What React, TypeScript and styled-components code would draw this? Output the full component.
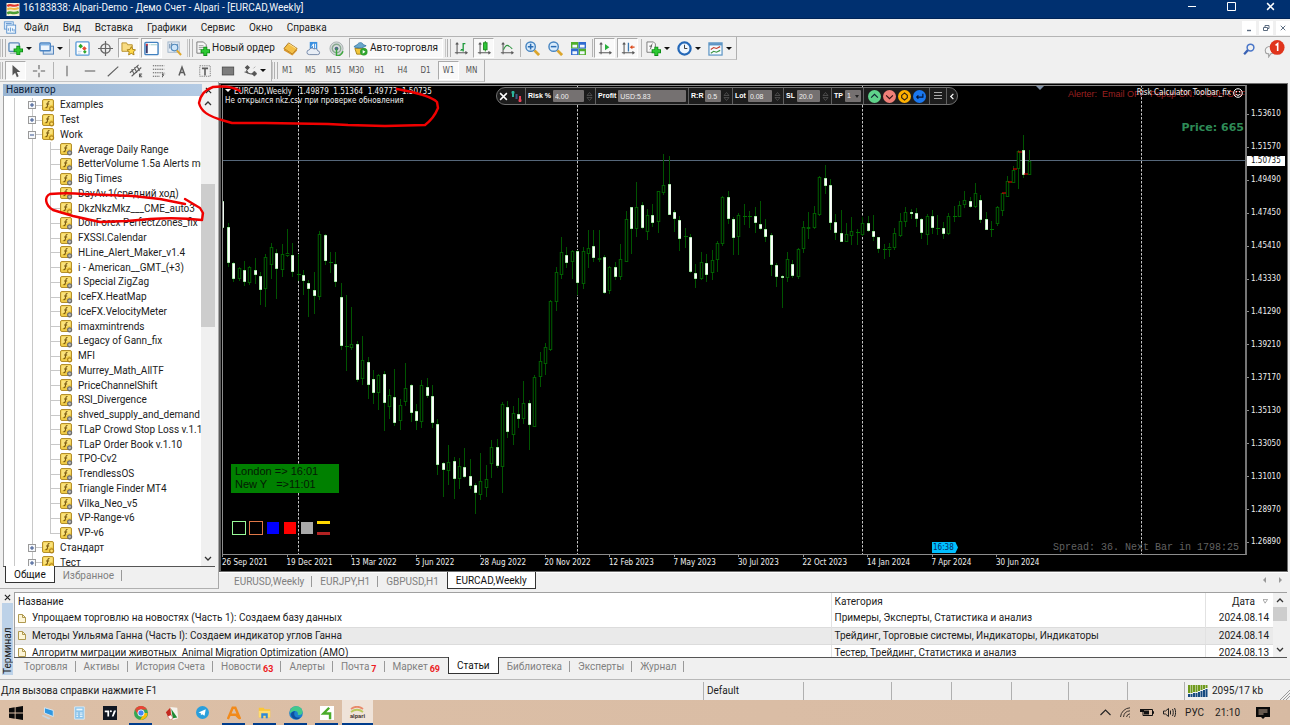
import React from "react";
import styled, { createGlobalStyle, css } from "styled-components";

const ui = `Roboto, "Noto Sans", sans-serif`;
const chartFont = `"DejaVu Sans Condensed", "DejaVu Sans", sans-serif`;
const plainFont = `"Liberation Sans", Arial, sans-serif`;

const Global = createGlobalStyle`
  * { box-sizing: border-box; }
  html, body, #root { height: 100%; margin: 0; }
  body { font: 10px/14px ${ui}; color: #1c1c1c; background: #f0f0f0; overflow: hidden; }
  button, input, select { font: inherit; color: inherit; margin: 0; padding: 0; border: 0; background: none; border-radius: 0; }
  svg { display: block; flex: none; }
  ul { list-style: none; margin: 0; padding: 0; }
`;

/* ---------- window shell ---------- */

const Window = styled.div`
  position: relative;
  display: flex;
  flex-direction: column;
  height: 100vh;
`;

const TitleBar = styled.header`
  display: flex;
  align-items: center;
  height: 19px;
  padding-left: 6px;
  background: #003070;
  border-bottom: 1px solid #002458;
  color: #f2f5fa;
`;

const TitleText = styled.h1`
  flex: 1;
  margin: 0;
  padding: 0 0 3px 3px;
  font: 10px/14px ${ui};
`;

const WindowButton = styled.button`
  display: grid;
  place-items: center;
  width: 39px;
  height: 18px;
  padding-bottom: 5px;
`;

const MenuBar = styled.nav`
  display: flex;
  align-items: center;
  height: 18px;
  padding-left: 3px;
  border-bottom: 1px solid #b4b4b4;
`;

const MenuItem = styled.button`
  padding: 0 7px;
`;

const MdiButtons = styled.div`
  display: flex;
  gap: 3px;
  margin-left: auto;
`;

const MdiButton = styled.button`
  display: grid;
  place-items: center;
  width: 14px;
  height: 14px;
  background: #fff;
`;

/* ---------- toolbars ---------- */

const ToolRow = styled.div<{ $h: number }>`
  display: flex;
  align-items: stretch;
  height: ${(p) => p.$h}px;
`;

const ToolGroup = styled.div`
  display: flex;
  align-items: stretch;
  border-right: 1px solid #b0b0b0;
  border-bottom: 1px solid #c4c4c4;
`;

const Grip = styled.i`
  width: 5px;
  margin: 2px 0;
  border-left: 1px solid #c8c8c8;
  &::after {
    content: "";
    display: block;
    width: 2px;
    height: 100%;
    margin-left: 1px;
    border: solid #b2b2b2;
    border-width: 0 1px;
  }
`;

const Sep = styled.i<{ $w?: number }>`
  width: ${(p) => p.$w ?? 3}px;
  margin: 2px 0;
  background: linear-gradient(#b4b4b4, #b4b4b4) center / 1px 100% no-repeat;
`;

const pressed = css`
  background: #f9f9f9;
  border: 1px solid #fff;
  border-top-color: #aaa;
  border-left-color: #aaa;
`;

const Tool = styled.button<{ $on?: boolean }>`
  display: grid;
  place-items: center;
  width: 21px;
  margin: 1px 2px 1px 0;
  color: #555;
  ${(p) => p.$on && pressed}
`;

const DropTool = styled.button`
  display: flex;
  align-items: center;
  gap: 3px;
  width: 31px;
  padding-left: 3px;
  &::after {
    content: "";
    border: solid transparent;
    border-width: 3px 3px 0;
    border-top-color: #111;
  }
`;

const TextTool = styled.button<{ $on?: boolean; $w: number }>`
  display: flex;
  align-items: center;
  gap: 2px;
  width: ${(p) => p.$w}px;
  margin: 1px 0;
  padding-left: 3px;
  white-space: nowrap;
  ${(p) => p.$on && pressed}
  ${(p) => p.$on && "margin-right: 2px;"}
`;

const Frame = styled(Tool)`
  font: 8px/12px ${chartFont};
  color: #555;
`;

const RightTools = styled.div`
  display: flex;
  align-items: center;
  gap: 9px;
  margin-left: auto;
  padding-right: 5px;
`;

/* ---------- middle area ---------- */

const Main = styled.main`
  display: flex;
  flex: 1;
  min-height: 0;
`;

const Navigator = styled.aside`
  display: flex;
  flex-direction: column;
  flex: none;
  width: 219px;
  padding: 2px 3px 4px 3px;
  border-right: 1px solid #a8a8a8;
  border-bottom: 1px solid #b0b0b0;
`;

const PanelHead = styled.div`
  display: flex;
  align-items: center;
  height: 12px;
`;

const PanelTitle = styled.h2`
  flex: 1;
  margin: 0;
  padding-left: 3px;
  height: 12px;
  font: 10px/12px ${ui};
  color: #0c1e3c;
  background: linear-gradient(90deg, #99b4d1, #b4cbe4);
`;

const CloseButton = styled.button`
  display: grid;
  place-items: center;
  width: 13px;
  height: 12px;
`;

const TreeBox = styled.div`
  display: flex;
  flex: 1;
  min-height: 0;
  overflow: hidden;
  background: #fff;
  border-left: 1px solid #a0a0a0;
`;

const Tree = styled.ul`
  flex: 1;
  display: flex;
  flex-direction: column;
  min-width: 0;
  height: calc(100% + 2px);
  overflow: hidden;
  margin-top: 2px;
  background: linear-gradient(#c8c8c8, #c8c8c8) 10px 0 / 1px 100% no-repeat;
`;

const TreeRow = styled.li<{ $level: 1 | 2; $last?: boolean }>`
  flex: 1 1 0;
  min-height: 0;
  display: flex;
  align-items: center;
  white-space: nowrap;
  padding-left: ${(p) => (p.$level === 1 ? 24 : 56)}px;
  background: ${(p) =>
      p.$level === 2
        ? `linear-gradient(#c8c8c8, #c8c8c8) 46px 0 / 1px ${p.$last ? "50%" : "100%"} no-repeat,
           linear-gradient(#c8c8c8, #c8c8c8) 46px 50% / 10px 1px no-repeat,`
        : `linear-gradient(#c8c8c8, #c8c8c8) 28px 50% / 10px 1px no-repeat,`}
    linear-gradient(#c8c8c8, #c8c8c8) 28px 0 / 1px 100% no-repeat;
`;

const Expander = styled.button`
  display: grid;
  place-items: center;
  width: 8px;
  height: 8px;
  margin-right: 6px;
  background: #f6f8fb;
  border: 1px solid #9a9a9a;
`;

const TreeLabel = styled.span`
  padding-left: 5px;
`;

const ScrollBar = styled.div<{ $w: number }>`
  display: flex;
  flex-direction: column;
  align-items: center;
  width: ${(p) => p.$w}px;
  background: #f0f0f0;
`;

const ScrollArrow = styled.button`
  display: grid;
  place-items: center;
  width: 100%;
  height: 14px;
`;

const Thumb = styled.div<{ $before: number; $size: number; $after: number }>`
  flex: ${(p) => p.$before + p.$size + p.$after};
  width: 100%;
  display: flex;
  flex-direction: column;
  &::before { content: ""; flex: ${(p) => p.$before}; }
  &::after { content: ""; flex: ${(p) => p.$after}; }
  i { flex: ${(p) => p.$size}; background: #cdcdcd; }
`;

const Tabs = styled.div<{ $h: number }>`
  display: flex;
  flex: none;
  align-items: flex-start;
  height: ${(p) => p.$h}px;
  border-top: 1px solid #555;
`;

const Tab = styled.button<{ $active?: boolean; $noLine?: boolean }>`
  position: relative;
  display: flex;
  padding: 0 8px;
  height: 16px;
  line-height: 17px;
  color: #808080;
  white-space: nowrap;
  &::after {
    content: "";
    position: absolute;
    right: 0;
    top: 3px;
    height: 11px;
    border-right: 1px solid #999;
    display: ${(p) => (p.$noLine || p.$active ? "none" : "block")};
  }
  ${(p) =>
    p.$active &&
    css`
      color: #111;
      background: #fff;
      border: 1px solid #333;
      border-top: 0;
      margin-top: -1px;
      height: 17px;
      line-height: 18px;
    `}
`;

const Count = styled.b`
  padding: 5px 0 0 2px;
  font: bold 9px/12px ${ui};
  color: #ec1c24;
`;

/* ---------- chart ---------- */

const ChartColumn = styled.section`
  display: flex;
  flex-direction: column;
  flex: 1;
  min-width: 0;
  padding: 1px 2px 0 0;
`;

const ChartFrame = styled.div`
  display: grid;
  grid-template-columns: minmax(0, 1fr) 40px;
  grid-template-rows: minmax(0, 1fr) 16px;
  flex: 1;
  min-height: 0;
  padding: 1px 0 0 1px;
  background: #000;
  border: 1px solid #6e6e6e;
  border-left: 2px solid #5c5c5c;
  color: #f0f0f0;
  font: 8px/10px ${chartFont};
`;

const Plot = styled.div`
  position: relative;
  min-width: 0;
  overflow: hidden;
  > svg { width: 100%; height: 100%; }
  &::after {
    content: "";
    position: absolute;
    inset: 0;
    border: 1px solid #8c8c8c;
    border-right: 2px solid #757575;
    pointer-events: none;
  }
`;

const PriceAxis = styled.ul`
  position: relative;
  display: flex;
  flex-direction: column;
  padding-top: 13px;
  margin-bottom: -4px;
`;

const PriceTick = styled.li`
  flex: 1;
  display: flex;
  align-items: center;
  &::before {
    content: "";
    width: 2px;
    margin-right: 2px;
    border-top: 1px solid #8c8c8c;
  }
`;

const CurrentPrice = styled.li`
  position: absolute;
  top: 71px;
  left: 0;
  width: 38px;
  padding-left: 4px;
  background: #fff;
  color: #111;
`;

const TimeAxis = styled.ul`
  grid-column: 1 / 3;
  display: grid;
  grid-template-columns: repeat(16, minmax(0, 1fr));
  padding-right: 33px;
`;

const TimeTick = styled.li`
  white-space: nowrap;
  line-height: 11px;
  &::before {
    content: "";
    display: block;
    width: 1px;
    height: 2px;
    background: #8c8c8c;
  }
`;

const Quote = styled.div`
  position: absolute;
  top: 2px;
  left: 3px;
  line-height: 9px;
  white-space: pre;
  p { margin: 0; }
`;

const Triangle = styled.i`
  display: inline-block;
  margin: 0 3px 2px 0;
  border: solid transparent;
  border-width: 3px 3px 0;
  border-top-color: #fff;
`;

const Corner = styled.div<{ $top?: number; $bottom?: number; $right: number }>`
  position: absolute;
  right: ${(p) => p.$right}px;
  ${(p) => (p.$top !== undefined ? `top: ${p.$top}px;` : `bottom: ${p.$bottom}px;`)}
  display: flex;
  align-items: center;
  gap: 2px;
  white-space: pre;
`;

const Alerter = styled(Corner)`
  font: 9px/12px ${plainFont};
  color: #9c2020;
`;

const IndicatorName = styled(Corner)`
  line-height: 12px;
`;

const PriceNote = styled(Corner)`
  font: bold 11px/14px "DejaVu Sans", sans-serif;
  color: #2e8b57;
`;

const SpreadNote = styled(Corner)`
  font: 10px/12px "Liberation Mono", monospace;
  color: #626262;
`;

const Sessions = styled.div`
  position: absolute;
  left: 9px;
  bottom: 62px;
  width: 108px;
  padding: 1px 4px 2px;
  background: #008000;
  color: #041a04;
  font: 11px/13px ${plainFont};
  white-space: pre;
`;

const Palette = styled.div`
  position: absolute;
  left: 10px;
  bottom: 20px;
  display: flex;
  gap: 3px;
`;

const Swatch = styled.button<{ $fill?: string; $line?: string }>`
  width: 14px;
  height: 14px;
  background: ${(p) => p.$fill ?? "#000"};
  border: 1px solid ${(p) => p.$line ?? "#000"};
`;

const Levels = styled.button`
  width: 13px;
  height: 14px;
  border: solid #ffd800;
  border-width: 3px 0;
  border-bottom-color: #b22222;
`;

const BarClock = styled.div`
  position: absolute;
  left: 710px;
  bottom: 2px;
  width: 26px;
  padding-left: 1px;
  background: #00bfff;
  color: #062a66;
  line-height: 11px;
  clip-path: polygon(0 0, 90% 0, 100% 50%, 90% 100%, 0 100%);
`;

/* ---------- risk calculator ---------- */

const RiskBar = styled.form`
  position: absolute;
  left: 274px;
  top: 2px;
  display: flex;
  height: 18px;
  background: #1c1c1c;
  border: 1px solid #707070;
  border-radius: 9px;
  color: #fff;
  font: bold 7px/10px ${plainFont};
  z-index: 1;
`;

const RiskPart = styled.div<{ $w: number }>`
  display: flex;
  align-items: center;
  gap: 2px;
  width: ${(p) => p.$w}px;
  padding: 0 2px;
  & + & { border-left: 1px solid #606060; }
  label { white-space: nowrap; }
`;

const fieldStyle = css`
  height: 12px;
  padding-left: 2px;
  background: #757171;
  border-radius: 1px;
  color: #f0f0f0;
  font: 7px/10px ${plainFont};
`;

const RiskInput = styled.input`
  flex: 1;
  min-width: 0;
  ${fieldStyle}
`;

const RiskSelect = styled.select`
  appearance: none;
  width: 16px;
  ${fieldStyle}
`;

const SelectWrap = styled.span`
  position: relative;
  &::after {
    content: "";
    position: absolute;
    right: 2px;
    top: 5px;
    border: solid transparent;
    border-width: 3px 2px 0;
    border-top-color: #222;
    pointer-events: none;
  }
`;

const RoundGroup = styled(RiskPart)`
  justify-content: center;
`;

const Round = styled.button<{ $c: string }>`
  display: grid;
  place-items: center;
  flex: none;
  width: 13px;
  height: 13px;
  border-radius: 50%;
  background: ${(p) => p.$c};
`;

const Plain = styled.button`
  display: grid;
  place-items: center;
  flex: none;
  height: 14px;
`;

/* ---------- terminal ---------- */

const Terminal = styled.section`
  display: flex;
  height: 91px;
  border-bottom: 1px solid #b8b8b8;
`;

const TerminalSide = styled.div`
  display: flex;
  flex-direction: column;
  width: 14px;
  padding: 2px 1px 4px 1px;
`;

const SideTitle = styled.h2`
  flex: 1;
  margin: 0 0 0 1px;
  writing-mode: vertical-rl;
  transform: rotate(180deg);
  font: 10px/11px ${ui};
  background: #bdd2e8;
  padding-top: 1px;
`;

const TerminalBody = styled.div`
  display: flex;
  flex-direction: column;
  flex: 1;
  min-width: 0;
  padding: 3px 3px 4px 0;
`;

const TableArea = styled.div`
  display: flex;
  flex: 1;
  min-height: 0;
  overflow: hidden;
  background: #fff;
  border: solid #a0a0a0;
  border-width: 1px 0 0 1px;
`;

const Articles = styled.table`
  flex: 1;
  table-layout: fixed;
  border-collapse: collapse;
  align-self: flex-start;
  th, td {
    height: 17px;
    padding: 0 3px;
    font-weight: normal;
    text-align: left;
    white-space: pre;
    border-right: 1px solid #e2e2e2;
  }
  th:last-child, td:last-child { text-align: right; border-right: 0; }
  td:last-child { padding-right: 4px; }
  th:last-child { padding-right: 5px; }
  tbody tr:nth-child(2) { background: #eaeaea; }
  tbody tr:nth-child(2) td { border-top: 1px solid #dcdcdc; border-bottom: 1px solid #dcdcdc; }
`;

const WithIcon = styled.a`
  display: flex;
  align-items: center;
  gap: 6px;
  color: inherit;
  text-decoration: none;
`;

const SortMark = styled.span`
  display: inline-block;
  vertical-align: middle;
  margin-left: 8px;
`;

/* ---------- status and task bars ---------- */

const StatusBar = styled.footer`
  display: flex;
  align-items: stretch;
  height: 20px;
  padding: 2px 0 0;
`;

const StatusCell = styled.div<{ $w?: number }>`
  display: flex;
  align-items: center;
  gap: 3px;
  ${(p) => (p.$w ? `width: ${p.$w}px;` : "flex: 1;")}
  padding-left: 1px;
  white-space: nowrap;
  & + & { padding-left: 3px; border-left: 1px solid #b0b0b0; }
`;

const TaskBar = styled.footer`
  display: flex;
  height: 25px;
  background: linear-gradient(90deg, #dcbfa6, #dabda5 60%, #d8bba3);
`;

const TaskItem = styled.button<{ $open?: boolean; $active?: boolean; $w?: number }>`
  position: relative;
  display: grid;
  place-items: center;
  width: ${(p) => p.$w ?? 31}px;
  ${(p) => p.$active && "background: #efe3d9;"}
  ${(p) =>
    (p.$open || p.$active) &&
    css`
      &::after {
        content: "";
        position: absolute;
        left: ${p.$active ? 0 : 4}px;
        right: ${p.$active ? 0 : 4}px;
        bottom: 0;
        height: 2px;
        background: #003c8c;
      }
    `}
`;

const Tray = styled.div`
  display: flex;
  align-items: center;
  gap: 9px;
  margin-left: auto;
  padding-right: 20px;
  time { margin: 0 7px 0 2px; }
`;

const Annotation = styled.svg`
  position: absolute;
  left: 0;
  top: 0;
  overflow: visible;
  pointer-events: none;
  z-index: 2;
`;

/* ---------- icons ---------- */

type IconProps = { s?: number; h?: number; box?: string; children: React.ReactNode };
const Icon = ({ s = 15, h, box = "0 0 16 16", children }: IconProps) => (
  <svg width={s} height={h ?? s} viewBox={box} fill="none" aria-hidden="true">
    {children}
  </svg>
);

const Plus = ({ x, y }: { x: number; y: number }) => (
  <>
    <path d={`M${x} ${y - 5}v10M${x - 5} ${y}h10`} stroke="#0c8a14" strokeWidth="4.200" />
    <path d={`M${x} ${y - 4}v8M${x - 4} ${y}h8`} stroke="#2cc832" strokeWidth="2.600" />
  </>
);

const AppLogo = () => (
  <Icon s={14} h={13}>
    <rect width="16" height="16" fill="#f6efd8" />
    <path d="M1 4c4-4 6 2 14-2" stroke="#e0352b" strokeWidth="2.6" />
    <path d="M1 8c4-4 6 2 14-2" stroke="#efb73e" strokeWidth="2.4" />
    <path d="M1 13c4-4 6 2 14-2" stroke="#4b9e35" strokeWidth="3" />
  </Icon>
);
const MdiLogo = () => (
  <Icon s={14} h={13}>
    <rect x="1" y="1" width="11" height="9" fill="#dcebfa" stroke="#5a94d0" />
    <rect x="4" y="5" width="11" height="10" fill="#eef6fd" stroke="#4a86c8" />
    <path d="M3 3h7M6 12V9M8.500 13V8M11 12V9M13 13v-3" stroke="#4a86c8" />
  </Icon>
);
const NewChartIcon = () => (
  <Icon>
    <rect x="1" y="2" width="11" height="9" rx="1" fill="#e9f2fb" stroke="#5b88b8" strokeWidth="1.400" />
    <path d="M2 13h9" stroke="#8aa" />
    <Plus x={11} y={10} />
  </Icon>
);
const ProfilesIcon = () => (
  <Icon>
    <rect x="4.500" y="5.500" width="11" height="8.500" fill="#cfe0f2" stroke="#5080b8" />
    <rect x="1" y="2" width="11" height="8.500" rx="1" fill="#eef5fc" stroke="#4a84c4" strokeWidth="1.600" />
    <path d="M2 4h9" stroke="#7ab0e4" strokeWidth="1.500" />
  </Icon>
);
const MarketIcon = () => (
  <Icon>
    <rect x="1" y="1" width="14" height="14" rx="1" fill="#fff" stroke="#5b9bd8" strokeWidth="1.400" />
    <path d="M6 3l2.500 2.500L6 8 3.500 5.500z" fill="#2ea82e" />
    <path d="M10 5.500l2.500 2.500L10 10.500 7.500 8z" fill="#e84a32" />
    <path d="M10.500 9.500l2 2-2 2-2-2z" fill="#2ea82e" />
    <path d="M3 11h4M3 13h3" stroke="#c4d4e4" />
  </Icon>
);
const TargetIcon = () => (
  <Icon>
    <circle cx="8" cy="8" r="5" stroke="#666" strokeWidth="1.400" />
    <path d="M8 0v16M0 8h16" stroke="#666" strokeWidth="1.300" />
  </Icon>
);
const FavIcon = () => (
  <Icon>
    <path d="M1 2h5l1 2h5v7H1z" fill="#f8dc84" stroke="#b8902c" />
    <path d="M11 6l1.500 3 3 .4-2.200 2.200.6 3.200-2.900-1.600-2.900 1.600.6-3.200L6.500 9.400l3-.4z" fill="#ffd94a" stroke="#a87f18" />
  </Icon>
);
const PanelIcon = () => (
  <Icon>
    <rect x="1" y="1.500" width="14" height="13" rx="1" fill="#fdfeff" stroke="#4080c0" strokeWidth="1.500" />
    <path d="M3 3v10" stroke="#3a3a6a" strokeWidth="2" />
    <path d="M5 4h1M7 4h7" stroke="#9cc" />
    <circle cx="3" cy="4" r="1" fill="#e33" />
  </Icon>
);
const TesterIcon = () => (
  <Icon>
    <rect x="1" y="1" width="12" height="11" fill="#e6eef6" stroke="#a0b4c8" />
    <path d="M3 3v5M5 2v6M11 3v4" stroke="#5c7c9c" />
    <circle cx="8" cy="7" r="3.500" fill="#cde4f8" stroke="#5088bc" strokeWidth="1.200" />
    <path d="M10.500 10l4.500 5" stroke="#e0a82c" strokeWidth="2.200" />
  </Icon>
);
const OrderIcon = () => (
  <Icon>
    <path d="M2 1h7l3 3v9H2z" fill="#f6f6f6" stroke="#777" />
    <path d="M4 5h5M4 7h6M4 9h3" stroke="#999" />
    <Plus x={11} y={11} />
  </Icon>
);
const BookIcon = () => (
  <Icon>
    <path d="M6 2l9 6-5 6-9-6z" fill="#f3bf46" stroke="#a8741c" />
    <path d="M1 8l9 6 5-6v2l-5 5.500L1 10z" fill="#d8942a" />
    <path d="M6 3l8 5" stroke="#ffe49a" />
  </Icon>
);
const CloudIcon = () => (
  <Icon>
    <rect x="4" y="1" width="8" height="9" fill="#3a90e0" />
    <path d="M6 6l2-3v5M10 3v5" stroke="#fff" />
    <path d="M3.500 14.500a2.500 2.500 0 010-5 3 3 0 015-1 3 3 0 014 2 2 2 0 010 4z" fill="#e8eef6" stroke="#7488a8" />
  </Icon>
);
const SignalIcon = () => (
  <Icon>
    <circle cx="8" cy="8" r="7" fill="#d8dcdc" stroke="#a8b0b0" />
    <circle cx="8" cy="8" r="4.500" stroke="#88a890" strokeWidth="1.500" />
    <circle cx="8" cy="8" r="2" fill="#4c6888" />
    <path d="M8 8v8c3 0 6-2 7-5" stroke="#3aa83a" strokeWidth="1.500" />
  </Icon>
);
const RobotIcon = () => (
  <Icon>
    <path d="M2 8l2 6h7l2-6z" fill="#f2c63a" stroke="#a8841c" />
    <path d="M1 6c3 2 9 2 13-1l-3-1C10 1 6 1 4.500 4z" fill="#6aa8cc" stroke="#3f7ea8" />
    <circle cx="11.500" cy="11.500" r="4" fill="#2fa42f" />
    <path d="M10.300 9.500v4l3-2z" fill="#fff" />
  </Icon>
);
const Axes = ({ children }: { children: React.ReactNode }) => (
  <Icon s={14}>
    <path d="M3.500 3v12M1 13.500h14M2 4l1.500-2L5 4M13 12l2 1.500-2 1.500" stroke="#5a5a5a" strokeWidth="1.200" />
    {children}
  </Icon>
);
const BarsIcon = () => (
  <Axes>
    <path d="M8 10h2.500V3H13M10.500 3v9M8 10v1" stroke="#1f9a3c" strokeWidth="1.500" />
  </Axes>
);
const CandleIcon = () => (
  <Axes>
    <path d="M9.500 0v12" stroke="#168a16" />
    <rect x="7.500" y="2" width="4" height="8" fill="#2fc43a" stroke="#168a16" />
  </Axes>
);
const LineIcon = () => (
  <Axes>
    <path d="M4 10c3-7 5-6 10-1" stroke="#2e9440" strokeWidth="1.200" />
  </Axes>
);
const ZoomIcon = ({ plus }: { plus?: boolean }) => (
  <Icon>
    <path d="M10 10l5 5" stroke="#dba52c" strokeWidth="3" />
    <circle cx="6" cy="6" r="5" fill="#d9ecfc" stroke="#4684c0" strokeWidth="1.500" />
    <path d={plus ? "M3 6h6M6 3v6" : "M3 6h6"} stroke="#2a6cb4" strokeWidth="1.600" />
  </Icon>
);
const TilesIcon = () => (
  <Icon>
    <path d="M0 1h8v7H0zM8 8h8v7H8z" fill="#4fae2a" />
    <path d="M8 1h8v7H8zM0 8h8v7H0z" fill="#2f6ad0" />
    <path d="M1.500 4h5v3h-5zM9.500 4h5v3h-5zM1.500 11h5v3h-5zM9.500 11h5v3h-5z" fill="#f0f6fc" />
  </Icon>
);
const AutoScrollIcon = () => (
  <Axes>
    <path d="M8 3.500v7l5-3.500z" fill="#27b03c" />
  </Axes>
);
const ShiftIcon = () => (
  <Axes>
    <path d="M8.500 2v10" stroke="#3c78b0" strokeWidth="1.500" />
    <path d="M10 7l3-2.500v5z" fill="#dc4a1c" />
    <path d="M12 7h3.500" stroke="#dc4a1c" strokeWidth="1.500" />
  </Axes>
);
const IndicatorsIcon = () => (
  <Icon>
    <path d="M1 1h7l2 2v9H1z" fill="#fafafa" stroke="#777" />
    <path d="M7 3c-2 0-1 6-3 6M3.500 5.500h3" stroke="#555" />
    <Plus x={11} y={11} />
  </Icon>
);
const ClockIcon = () => (
  <Icon>
    <circle cx="8" cy="8" r="6.500" fill="#eef6ff" stroke="#2468b8" strokeWidth="2.400" />
    <path d="M8 4v4h3" stroke="#333" />
  </Icon>
);
const TemplateIcon = () => (
  <Icon>
    <rect x="1" y="2" width="14" height="13" fill="#f4fafe" stroke="#5c94c4" strokeWidth="1.300" />
    <path d="M1 3.500h14" stroke="#5c94c4" strokeWidth="2.500" />
    <path d="M3 9l3-2 3 1 4-2" stroke="#c43a2a" strokeWidth="1.200" />
    <path d="M3 13l3-2 3 1 4-2" stroke="#3a9440" strokeWidth="1.200" />
  </Icon>
);
const SearchIcon = () => (
  <Icon s={12}>
    <circle cx="10" cy="6" r="4.500" stroke="#4a76c8" strokeWidth="2" />
    <path d="M6.500 9.500L1.500 15" stroke="#3a62b4" strokeWidth="3" />
  </Icon>
);
const BellIcon = () => (
  <Icon s={21} h={18} box="0 0 19 17">
    <path d="M1 11a5 4 0 119 1l-4 1-2 3v-3c-2 0-3-1-3-2z" fill="#f4f4f4" stroke="#a0a0a0" />
    <circle cx="12" cy="7" r="7" fill="#e0341c" />
    <path d="M10.500 5l2-1.500v7" stroke="#fff" strokeWidth="1.500" />
  </Icon>
);
const CursorIcon = () => (
  <Icon s={14}>
    <path d="M4 1v12l3-3 2 5 2-1-2-5h4z" fill="#555" />
  </Icon>
);
const Sketch = ({ d, w = 1.2, s = 14, dash }: { d: string; w?: number; s?: number; dash?: string }) => (
  <Icon s={s}>
    <path d={d} stroke="#5c5c5c" strokeWidth={w} strokeDasharray={dash} />
  </Icon>
);
const ShapesIcon = () => (
  <Icon s={14}>
    <path d="M5 1l3 3-3 3-3-3zM1 9l4-1 1 3z" fill="#555" />
    <path d="M4 7c1 4 4 5 8 4" stroke="#555" strokeWidth="1.200" />
    <path d="M13 8l3 3-3 3-3-3zM12 5l2-2" fill="#555" stroke="#555" strokeWidth=".5" />
  </Icon>
);
const FnIcon = ({ gold }: { gold?: boolean }) => (
  <Icon s={13} box="0 0 13 13">
    <rect x=".5" y=".5" width="11" height="11" rx="1.500" fill="#f0cc48" stroke="#b48f2c" />
    <path d="M1.500 1.500h9v4l-9 3z" fill="#fae27c" />
    <path d="M7.500 2.500c-2-.5-1.500 2-2 4s-.7 2.500-2 2M4 5h3.200" stroke="#7a5a10" strokeWidth="1.100" />
    <circle cx="9.600" cy="9.800" r="2" fill={gold ? "#ffe070" : "#b8b8b8"} stroke={gold ? "#b08418" : "#6c6c6c"} strokeWidth="1.200" />
  </Icon>
);
const Chevron = ({ up }: { up?: boolean }) => (
  <Icon s={8} box="0 0 8 8">
    <path d={up ? "M1 6l3-3 3 3" : "M1 2l3 3 3-3"} stroke="#333" strokeWidth="1.300" />
  </Icon>
);
const Cross = ({ s = 7, c = "#222" }: { s?: number; c?: string }) => (
  <Icon s={s} box="0 0 8 8">
    <path d="M1 1l6 6M7 1L1 7" stroke={c} strokeWidth="1.300" />
  </Icon>
);
const DocIcon = () => (
  <Icon s={8} h={9} box="0 0 8 9">
    <path d="M.5.5h4l3 3v5h-7z" fill="#fdf5d8" stroke="#b09a50" />
    <path d="M4.500.5v3h3" stroke="#b09a50" />
  </Icon>
);
const Spinner = () => (
  <Icon s={7} h={11} box="0 0 7 11">
    <path d="M1 4.500l2.500-3 2.500 3zM1 6.500l2.500 3 2.500-3z" stroke="#555" strokeWidth=".8" />
  </Icon>
);

/* ---------- chart data ---------- */

// One entry per week: high, body top, body bottom, low, and 1 for a falling (filled) candle.
const candles: number[][] = [
  [113,116,143,145,1],[138,142,178,182,1],[177,178,194,197,1],[182,183,194,196,0],[176,185,197,201,1],
  [181,182,198,200,0],[173,185,190,199,1],[187,191,205,220,1],[169,172,204,222,0],[158,162,180,194,0],
  [164,168,184,214,1],[159,169,185,192,0],[144,168,171,172,0],[158,170,187,192,1],[169,189,190,196,0],
  [185,190,196,210,1],[195,198,204,232,1],[187,205,211,229,1],[146,149,212,215,0],[149,150,176,180,1],
  [167,177,178,188,0],[167,179,197,202,1],[198,212,261,265,1],[210,261,262,286,0],[222,259,263,265,0],
  [256,259,295,297,1],[251,275,294,300,0],[272,277,300,314,1],[285,294,308,319,1],[289,290,308,325,0],
  [286,289,318,346,1],[304,310,322,334,0],[284,312,338,341,1],[314,320,336,345,0],[278,303,317,321,0],
  [299,300,328,337,1],[319,326,336,345,1],[295,300,337,343,0],[293,302,311,313,1],[300,311,338,343,1],
  [334,339,380,390,1],[377,378,385,412,1],[360,377,386,400,0],[372,376,394,414,1],[373,381,394,404,0],
  [363,382,392,393,1],[374,391,401,404,1],[398,400,408,429,1],[368,396,410,415,0],[380,394,403,412,0],
  [355,362,379,393,0],[354,362,381,383,1],[317,319,382,408,0],[316,322,347,353,1],[321,328,350,360,0],
  [313,329,334,343,1],[296,318,334,339,0],[315,318,340,365,1],[290,292,342,342,0],[267,276,292,302,0],
  [258,262,279,290,0],[215,216,265,266,0],[182,187,217,226,0],[152,167,190,194,0],[162,170,178,183,1],
  [165,166,177,194,0],[165,166,198,210,1],[162,166,199,204,0],[145,163,169,183,0],[145,161,173,177,1],
  [145,173,175,177,0],[170,172,208,209,1],[181,182,206,209,0],[177,182,192,195,1],[159,174,192,195,0],
  [126,134,177,177,0],[122,122,144,169,1],[97,122,144,152,0],[117,120,143,144,1],[124,130,147,155,0],
  [119,130,138,142,1],[106,106,137,148,0],[69,100,108,110,0],[71,99,130,130,1],[125,127,134,147,1],
  [131,135,154,166,1],[143,151,152,163,0],[149,152,187,188,1],[179,188,194,203,1],[167,177,194,195,0],
  [169,178,190,197,1],[165,175,188,195,0],[156,158,175,187,0],[111,112,159,161,0],[106,112,134,139,1],
  [132,134,153,170,1],[128,130,152,170,0],[119,131,132,140,1],[126,131,132,143,0],[122,131,138,148,1],
  [116,139,144,145,1],[134,144,152,157,1],[148,150,180,191,1],[178,180,192,202,1],[190,191,193,223,1],
  [167,174,193,197,0],[175,179,191,193,1],[163,164,192,194,0],[136,142,164,168,0],[127,142,144,154,0],
  [121,128,143,144,0],[91,92,130,131,0],[80,93,101,109,1],[94,100,138,145,1],[129,137,148,155,1],
  [125,148,157,157,1],[138,149,157,157,0],[132,146,151,160,0],[144,147,148,160,0],[132,138,150,151,0],
  [131,138,146,147,1],[130,146,152,156,1],[152,152,164,168,1],[159,164,165,174,0],[158,162,165,172,0],
  [143,148,163,165,0],[128,136,151,152,0],[122,127,137,142,0],[124,127,129,134,1],[123,128,134,142,1],
  [133,134,148,154,1],[129,131,150,160,0],[125,131,143,149,1],[130,143,144,150,0],[137,143,149,154,1],
  [128,131,149,150,0],[121,131,132,137,0],[116,120,132,132,0],[106,115,120,123,0],[112,116,122,123,1],
  [98,108,122,123,0],[110,115,135,138,1],[127,134,145,145,1],[136,144,145,152,0],[121,122,139,141,0],
  [108,108,126,131,0],[91,96,112,112,0],[81,85,98,98,0],[65,66,84,104,0],[50,65,90,93,1],[65,76,90,90,0],
];
const STEP = 5.376;
const yearLines = [76, 355, 640, 919];
const signals = [[782, 108], [788, 97], [793, 84], [798, 67], [804, 89]];

const CandleChart = () => (
  <svg viewBox="0 0 1025 470" preserveAspectRatio="none" role="img" aria-label="EURCAD Weekly">
    {yearLines.map((x) => (
      <path key={x} d={`M${x + 0.5} 0V470`} stroke="#c4c4c4" strokeDasharray="2.500 1.500" />
    ))}
    <path d="M0 75.500H1025" stroke="#55677a" />
    {candles.map(([hi, top, bot, lo, falling], i) => {
      const x = Math.floor(0.9 + i * STEP);
      const h = Math.max(1, bot - top);
      return (
        <g key={i}>
          <path d={`M${x + 0.5} ${hi}V${lo}`} stroke="#005400" />
          {h <= 1 ? (
            <path d={`M${x - 1} ${top + 0.5}h4`} stroke="#007000" />
          ) : falling ? (
            <>
              <rect x={x - 1} y={top} width="3" height={h} fill="#5fd35f" />
              <rect x={x - 0.5} y={top + 0.5} width="2.400" height={h - 1} fill="#fff" />
            </>
          ) : (
            <rect x={x - 0.75} y={top + 0.5} width="2.500" height={h - 1} fill="#000" stroke="#006000" />
          )}
        </g>
      );
    })}
    {signals.map(([x, y]) => (
      <path key={x} d={`M${x - 2} ${y}h4`} stroke="#f00000" />
    ))}
    <path d="M814 1h8l-4 4z" fill="#7f90a6" />
  </svg>
);

const prices = ["1.53610","1.51570","1.49490","1.47450","1.45410","1.43330","1.41290","1.39210","1.37170","1.35130","1.33050","1.31010","1.28970","1.26890"];
const dates = ["26 Sep 2021","19 Dec 2021","13 Mar 2022","5 Jun 2022","28 Aug 2022","20 Nov 2022","12 Feb 2023","7 May 2023","30 Jul 2023","22 Oct 2023","14 Jan 2024","7 Apr 2024","30 Jun 2024"];

type Node = { name: string; level: 1 | 2; open?: boolean; gold?: boolean };
const work = ["Average Daily Range","BetterVolume 1.5a Alerts mod","Big Times","DayAv.1(средний ход)","DkzNkzMkz___CME_auto3","DonForex PerfectZones_fix","FXSSI.Calendar","HLine_Alert_Maker_v1.4","i - American__GMT_(+3)","I Special ZigZag","IceFX.HeatMap","IceFX.VelocityMeter","imaxmintrends","Legacy of Gann_fix","MFI","Murrey_Math_AllTF","PriceChannelShift","RSI_Divergence","shved_supply_and_demand","TLaP Crowd Stop Loss v.1.19","TLaP Order Book v.1.10","TPO-Cv2","TrendlessOS","Triangle Finder MT4","Vilka_Neo_v5","VP-Range-v6","VP-v6"];
const goldNames = ["DkzNkzMkz___CME_auto3", "i - American__GMT_(+3)", "MFI"];
const nodes: Node[] = [
  { name: "Examples", level: 1, gold: true },
  { name: "Test", level: 1, gold: true },
  { name: "Work", level: 1, gold: true, open: true },
  ...work.map((name) => ({ name, level: 2 as const, gold: goldNames.includes(name) })),
  { name: "Стандарт", level: 1, gold: true },
  { name: "Тест", level: 1, gold: true },
];

const articles = [
  ["Упрощаем торговлю на новостях (Часть 1): Создаем базу данных", "Примеры, Эксперты, Статистика и анализ", "2024.08.14"],
  ["Методы Уильяма Ганна (Часть I): Создаем индикатор углов Ганна", "Трейдинг, Торговые системы, Индикаторы, Индикаторы", "2024.08.14"],
  ["Алгоритм миграции животных  Animal Migration Optimization (AMO)", "Тестер, Трейдинг, Статистика и анализ", "2024.08.13"],
];

const terminalTabs: [string, string?][] = [["Торговля"],["Активы"],["История Счета"],["Новости","63"],["Алерты"],["Почта","7"],["Маркет","69"],["Статьи"],["Библиотека"],["Эксперты"],["Журнал"]];

/* ---------- sections ---------- */

const Toolbars = () => (
  <>
    <ToolRow $h={23}>
      <ToolGroup>
        <Grip />
        <DropTool aria-label="Новый график"><NewChartIcon /></DropTool>
        <DropTool aria-label="Профили"><ProfilesIcon /></DropTool>
        <Sep $w={5} />
        <Tool aria-label="Обзор рынка"><MarketIcon /></Tool>
        <Tool aria-label="Окно данных"><TargetIcon /></Tool>
        <Tool $on aria-label="Навигатор"><FavIcon /></Tool>
        <Tool $on aria-label="Терминал"><PanelIcon /></Tool>
        <Tool aria-label="Тестер"><TesterIcon /></Tool>
        <Grip />
        <TextTool $w={88}><OrderIcon />Новый ордер</TextTool>
        <Tool aria-label="MetaEditor"><BookIcon /></Tool>
        <Tool aria-label="Облако"><CloudIcon /></Tool>
        <Tool aria-label="Сигналы"><SignalIcon /></Tool>
        <TextTool $on $w={94}><RobotIcon />Авто-торговля</TextTool>
        <Grip />
        <Tool aria-label="Бары"><BarsIcon /></Tool>
        <Tool $on aria-label="Свечи"><CandleIcon /></Tool>
        <Tool aria-label="Линия"><LineIcon /></Tool>
        <Sep />
        <Tool aria-label="Увеличить"><ZoomIcon plus /></Tool>
        <Tool aria-label="Уменьшить"><ZoomIcon /></Tool>
        <Tool aria-label="Окна мозаикой"><TilesIcon /></Tool>
        <Sep />
        <Tool $on aria-label="Автопрокрутка"><AutoScrollIcon /></Tool>
        <Tool $on aria-label="Сдвиг графика"><ShiftIcon /></Tool>
        <Sep />
        <DropTool aria-label="Индикаторы"><IndicatorsIcon /></DropTool>
        <DropTool aria-label="Периоды"><ClockIcon /></DropTool>
        <DropTool aria-label="Шаблоны"><TemplateIcon /></DropTool>
      </ToolGroup>
      <RightTools>
        <button aria-label="Поиск"><SearchIcon /></button>
        <button aria-label="Сообщения"><BellIcon /></button>
      </RightTools>
    </ToolRow>
    <ToolRow $h={22}>
      <ToolGroup>
        <Grip />
        <Tool $on aria-label="Курсор"><CursorIcon /></Tool>
        <Tool aria-label="Перекрестие"><Sketch d="M8 1v5M8 10v5M1 8h5M10 8h5" /></Tool>
        <Sep $w={5} />
        <Tool aria-label="Вертикальная линия"><Sketch d="M8 2v12" /></Tool>
        <Tool aria-label="Горизонтальная линия"><Sketch d="M2 8h12" /></Tool>
        <Tool aria-label="Трендовая линия"><Sketch d="M2 14L14 3" /></Tool>
        <Tool aria-label="Канал"><Sketch d="M1 10L11 1M3 14L14 4M3 6l3 6M6 4l3 6M9 2l3 6M12 11v4M12 11.500h3M12 13h2M12 14.500h3" /></Tool>
        <Tool aria-label="Фибоначчи"><Sketch dash="1.500 1" d="M1 2h13M1 6h13M1 10h13M1 14h8M12 11v4M12 11.500h3M12 13h2" /></Tool>
        <Tool aria-label="Текст"><Sketch w={2} d="M4 14L8 3l4 11M5.500 10h5" s={12} /></Tool>
        <Tool aria-label="Метка"><Icon s={14}><path d="M2 2h12v12H2z" stroke="#777" strokeDasharray="1.500 1" /><path d="M4.500 5h7M8 5v8" stroke="#5c5c5c" strokeWidth="1.800" /></Icon></Tool>
        <Tool aria-label="Прямоугольник"><Icon s={14}><rect x="1.500" y="3.500" width="13" height="9" fill="#7c7c7c" stroke="#4c4c4c" /></Icon></Tool>
        <DropTool aria-label="Фигуры"><ShapesIcon /></DropTool>
      </ToolGroup>
      <ToolGroup>
        <Grip />
        {["M1", "M5", "M15", "M30", "H1", "H4", "D1", "W1", "MN"].map((t) => (
          <Frame key={t} $on={t === "W1"}>{t}</Frame>
        ))}
      </ToolGroup>
    </ToolRow>
  </>
);

const RiskCalculator = () => (
  <RiskBar onSubmit={(e) => e.preventDefault()}>
    <RiskPart $w={28}>
      <Plain type="button" aria-label="Закрыть"><Cross s={9} c="#fff" /></Plain>
      <Icon s={12} h={13} box="0 0 12 13">
        <path d="M3 1v6M1.500 2.500h3" stroke="#2bb59b" strokeWidth="2" />
        <path d="M6.500 4v5" stroke="#3d5a86" strokeWidth="2" />
        <path d="M10 6v6M8.500 10.500h3" stroke="#e8435a" strokeWidth="2" />
      </Icon>
    </RiskPart>
    <RiskPart $w={70}><label htmlFor="risk">Risk %</label><RiskInput id="risk" defaultValue="4.00" /><Spinner /></RiskPart>
    <RiskPart $w={93}><label htmlFor="profit">Profit</label><RiskInput id="profit" defaultValue="USD:5.83" /></RiskPart>
    <RiskPart $w={44}><label htmlFor="rr">R:R</label><RiskInput id="rr" defaultValue="0.5" /><Spinner /></RiskPart>
    <RiskPart $w={51}><label htmlFor="lot">Lot</label><RiskInput id="lot" defaultValue="0.08" /><Spinner /></RiskPart>
    <RiskPart $w={48}><label htmlFor="sl">SL</label><RiskInput id="sl" defaultValue="20.0" /><Spinner /></RiskPart>
    <RiskPart $w={32}>
      <label htmlFor="tp">TP</label>
      <SelectWrap><RiskSelect id="tp" defaultValue="1"><option>1</option></RiskSelect></SelectWrap>
    </RiskPart>
    <RoundGroup $w={66}>
      <Round type="button" $c="#5fd38a" aria-label="Buy"><Icon s={9} box="0 0 8 8"><path d="M1 5l3-3 3 3" stroke="#123" /></Icon></Round>
      <Round type="button" $c="#f08078" aria-label="Sell"><Icon s={9} box="0 0 8 8"><path d="M1 3l3 3 3-3" stroke="#311" /></Icon></Round>
      <Round type="button" $c="#ffb000" aria-label="Pending"><Icon s={9} box="0 0 8 8"><path d="M1.500 3L4 .8 6.500 3v2L4 7.200 1.500 5z" stroke="#321" /></Icon></Round>
      <Round type="button" $c="#1a78f0" aria-label="Enter"><Icon s={9} box="0 0 8 8"><path d="M7 1.500v3H1.500M3 3L1.500 4.500 3 6" stroke="#013" /></Icon></Round>
    </RoundGroup>
    <RoundGroup $w={17}>
      <Plain type="button" aria-label="Меню"><Icon s={10} box="0 0 10 10"><path d="M1 1.500h8M1 4.500h8M1 7.500h8" stroke="#aaa" strokeWidth="1.200" /></Icon></Plain>
    </RoundGroup>
    <RiskPart $w={11}>
      <Plain type="button" aria-label="Свернуть"><Icon s={7} box="0 0 8 8"><path d="M5 1L2 4l3 3" stroke="#fff" strokeWidth="1.400" /></Icon></Plain>
    </RiskPart>
  </RiskBar>
);

const ChartTabs = styled(Tabs)`
  padding-left: 7px;
  border-top-color: #fff;
`;

const InsetTabs = styled(Tabs)`
  padding-left: 2px;
`;

const TabScroll = styled.div`
  display: flex;
  gap: 10px;
  margin-left: auto;
  padding: 4px 4px 0 0;
`;

const ChartPanel = () => (
  <ChartColumn>
    <ChartFrame>
      <Plot>
        <CandleChart />
        <Quote>
          <p><Triangle />EURCAD,Weekly   1.49879  1.51364  1.49773  1.50735</p>
          <p>Не открылся nkz.csv при проверке обновления</p>
        </Quote>
        <RiskCalculator />
        <Alerter $top={3} $right={2}>Alerter:  Email OFF  Popup ON:  PUSH OFF</Alerter>
        <IndicatorName $top={2} $right={4}>
          Risk Calculator Toolbar_fix
          <Icon s={10} box="0 0 10 10">
            <circle cx="5" cy="5" r="4.300" stroke="#fff" />
            <path d="M3.400 3v1.500M6.600 3v1.500M2.800 6c1 1.800 3.400 1.800 4.400 0" stroke="#fff" />
          </Icon>
        </IndicatorName>
        <PriceNote $top={36} $right={3}>Price: 665</PriceNote>
        <Sessions>{"London => 16:01\nNew Y   =>11:01"}</Sessions>
        <Palette>
          <Swatch $line="#98fb98" aria-label="Зелёный" />
          <Swatch $line="#e07848" aria-label="Оранжевый" />
          <Swatch $fill="#0000ff" aria-label="Синий" />
          <Swatch $fill="#ff0000" aria-label="Красный" />
          <Swatch $fill="#a9a9a9" aria-label="Серый" />
          <Levels aria-label="Уровни" />
        </Palette>
        <BarClock>16:38</BarClock>
        <SpreadNote $bottom={1} $right={8}>Spread: 36. Next Bar in 1798:25</SpreadNote>
      </Plot>
      <PriceAxis>
        {prices.map((p) => <PriceTick key={p}>{p}</PriceTick>)}
        <CurrentPrice>1.50735</CurrentPrice>
      </PriceAxis>
      <TimeAxis>{dates.map((d) => <TimeTick key={d}>{d}</TimeTick>)}</TimeAxis>
    </ChartFrame>
    <ChartTabs $h={17}>
      <Tab>EURUSD,Weekly</Tab>
      <Tab>EURJPY,H1</Tab>
      <Tab $noLine>GBPUSD,H1</Tab>
      <Tab $active>EURCAD,Weekly</Tab>
      <TabScroll>
        <button aria-label="Назад"><Icon s={6} box="0 0 6 6"><path d="M4 0v6L1 3z" fill="#999" /></Icon></button>
        <button aria-label="Вперёд"><Icon s={6} box="0 0 6 6"><path d="M1 0v6l3-3z" fill="#999" /></Icon></button>
      </TabScroll>
    </ChartTabs>
  </ChartColumn>
);

const NavigatorPanel = () => (
  <Navigator>
    <PanelHead>
      <PanelTitle>Навигатор</PanelTitle>
      <CloseButton aria-label="Закрыть"><Cross /></CloseButton>
    </PanelHead>
    <TreeBox>
      <Tree>
        {nodes.map((n) => (
          <TreeRow key={n.name} $level={n.level} $last={n.name === "VP-v6"}>
            {n.level === 1 && (
              <Expander aria-label={n.open ? "Свернуть" : "Развернуть"}>
                <Icon s={6} box="0 0 6 6">
                  <path d={n.open ? "M1 3h4" : "M1 3h4M3 1v4"} stroke="#34508c" />
                </Icon>
              </Expander>
            )}
            <FnIcon gold={n.gold} />
            <TreeLabel>{n.name}</TreeLabel>
          </TreeRow>
        ))}
      </Tree>
      <ScrollBar $w={14}>
        <ScrollArrow aria-label="Вверх"><Chevron up /></ScrollArrow>
        <Thumb $before={74} $size={142} $after={225}><i /></Thumb>
        <ScrollArrow aria-label="Вниз"><Chevron /></ScrollArrow>
      </ScrollBar>
    </TreeBox>
    <InsetTabs $h={18}>
      <Tab $active>Общие</Tab>
      <Tab>Избранное</Tab>
    </InsetTabs>
  </Navigator>
);

const TerminalPanel = () => (
  <Terminal>
    <TerminalSide>
      <CloseButton aria-label="Закрыть"><Cross /></CloseButton>
      <SideTitle>Терминал</SideTitle>
    </TerminalSide>
    <TerminalBody>
      <TableArea>
        <Articles>
          <colgroup>
            <col />
            <col style={{ width: 374 }} />
            <col style={{ width: 68 }} />
          </colgroup>
          <thead>
            <tr>
              <th>Название</th>
              <th>Категория</th>
              <th>Дата<SortMark><Icon s={5} box="0 0 6 6"><path d="M0 .5h5.500L2.500 5z" stroke="#999" /></Icon></SortMark></th>
            </tr>
          </thead>
          <tbody>
            {articles.map(([title, cat, date]) => (
              <tr key={title}>
                <td><WithIcon href="#"><DocIcon />{title}</WithIcon></td>
                <td>{cat}</td>
                <td>{date}</td>
              </tr>
            ))}
          </tbody>
        </Articles>
        <ScrollBar $w={14}>
          <ScrollArrow aria-label="Вверх"><Chevron up /></ScrollArrow>
          <Thumb $before={0} $size={14} $after={22}><i /></Thumb>
          <ScrollArrow aria-label="Вниз"><Chevron /></ScrollArrow>
        </ScrollBar>
      </TableArea>
      <InsetTabs $h={18}>
        {terminalTabs.map(([name, count]) => (
          <Tab key={name} $active={name === "Статьи"} $noLine={name === "Маркет"}>
            {name}
            {count && <Count>{count}</Count>}
          </Tab>
        ))}
      </InsetTabs>
    </TerminalBody>
  </Terminal>
);

const ResizeGrip = styled.span`
  align-self: flex-end;
  margin-left: auto;
`;

const Status = () => (
  <StatusBar>
    <StatusCell>Для вызова справки нажмите F1</StatusCell>
    <StatusCell $w={100}>Default</StatusCell>
    {[88, 60, 60, 57, 59, 57].map((w, i) => <StatusCell key={i} $w={w} />)}
    <StatusCell $w={106}>
      <Icon s={21} h={12} box="0 0 21 12">
        <path d="M1 0v8M3.500 0v8M6 0v7M8.500 0v7M11 0v6M13.500 0v5M16 0v4M18.500 0v3" stroke="#6f9a1c" strokeWidth="2" />
        <path d="M1 9v3M3.500 9v3M6 8v4M8.500 8v4M11 7v5M13.500 6v6M16 5v7M18.500 4v8" stroke="#174a80" strokeWidth="2" />
      </Icon>
      2095/17 kb
      <ResizeGrip>
        <Icon s={10} box="0 0 10 10"><path d="M0 10L10 0M3 10l7-7M6 10l4-4" stroke="#9a9a9a" /></Icon>
      </ResizeGrip>
    </StatusCell>
  </StatusBar>
);

const TaskLogo = styled.span`
  display: grid;
  justify-items: center;
  font: bold 6px/6px ${ui};
  color: #4a3c34;
`;

const Tasks = () => (
  <TaskBar>
    <TaskItem $w={32} aria-label="Пуск">
      <Icon s={14}><path d="M0 2.500l6.500-1v6H0zM7.500 1.300L16 0v7.500H7.500zM0 8.500h6.500v6L0 13.500zM7.500 8.500H16V16l-8.500-1.300z" fill="#0a0a0a" /></Icon>
    </TaskItem>
    <TaskItem aria-label="Компьютер">
      <Icon s={14}><path d="M4 2l10 3v7L4 8z" fill="#2f97e0" stroke="#d7ecfa" /><path d="M2 10l9 4-2 1.500-8-4z" fill="#c9d5de" /></Icon>
    </TaskItem>
    <TaskItem aria-label="Заметки">
      <Icon s={14}><path d="M3 1h11v14H3z" fill="#8cc4ea" stroke="#d9edf9" /><path d="M5 3h7v2H5z" fill="#eaf6fd" /><path d="M5 8h2M5 10h2M5 12h2M9 8h3M9 10h3M9 12h3" stroke="#e8f4fb" strokeWidth="1.200" /></Icon>
    </TaskItem>
    <TaskItem aria-label="TradingView">
      <Icon s={14}><rect width="16" height="16" fill="#111722" /><path d="M2 5h5v7H5V7H2zM10 12l2.500-7H15l-3 7z" fill="#fff" /><circle cx="9" cy="6" r="1.200" fill="#fff" /></Icon>
    </TaskItem>
    <TaskItem $open aria-label="Chrome">
      <Icon s={14}>
        <circle cx="8" cy="8" r="8" fill="#34a853" />
        <path d="M8 8h7.500A8 8 0 017 16l4-7z" fill="#fbbc05" />
        <path d="M1 4a8 8 0 0114 0H8z" fill="#ea4335" />
        <path d="M1 4l3.500 6L8 4z" fill="#ea4335" />
        <circle cx="8" cy="8" r="3.600" fill="#4285f4" stroke="#fff" />
      </Icon>
    </TaskItem>
    <TaskItem aria-label="Торговля">
      <Icon s={14}><path d="M6 1l8 1 1 12-6 2z" fill="#f5f2ec" /><path d="M1 7l5-5 1 9-3 2z" fill="#c4281e" /><path d="M7 3l7 10-5 1z" fill="#1f8a34" /><path d="M3 12l4-2 2 4-3 2z" fill="#fff" stroke="#b33" strokeWidth=".5" /></Icon>
    </TaskItem>
    <TaskItem aria-label="Telegram">
      <Icon s={13}><circle cx="8" cy="8" r="8" fill="#2a9fdc" /><path d="M3 8l9-4-1.500 8-3-2-1.500 1.500V9z" fill="#fff" /></Icon>
    </TaskItem>
    <TaskItem $open aria-label="AIMP">
      <Icon s={14}><path d="M1 15L6.500 2h3L15 15M4 10h6l4 4" stroke="#f28a1a" strokeWidth="2.800" /></Icon>
    </TaskItem>
    <TaskItem $open aria-label="Проводник">
      <Icon s={13}><path d="M1 2h6l1 2h7v10H1z" fill="#fbc638" /><path d="M1 6h14v8H1z" fill="#ffdc70" /><path d="M4 15V9h8v6h-2.500v-3h-3v3z" fill="#2f88d8" /></Icon>
    </TaskItem>
    <TaskItem $open aria-label="Edge">
      <Icon s={14}>
        <circle cx="8" cy="8" r="7.800" fill="#1b7fd0" />
        <path d="M1 6a7.500 7.500 0 0114.500 0c.5 3-2 5-5.500 4 1-3-2-5-5-4-2 .5-3.500 2-4 3z" fill="#42c98c" />
        <path d="M6 9c0 3 3 5 7 4-2 3-8 3-10-1s1-6 4-6c-1 1-1 2-1 3z" fill="#0d4f9e" />
      </Icon>
    </TaskItem>
    <TaskItem $open aria-label="Приложение">
      <Icon s={14}><rect width="16" height="16" fill="#fff" /><path d="M10.500 2L4 8.500h7.500V15" stroke="#4aac2a" strokeWidth="2.800" /></Icon>
    </TaskItem>
    <TaskItem $active aria-label="alpari">
      <TaskLogo>
        <Icon s={14} h={7} box="0 0 14 7">
          <path d="M1 3c4-3 8-3 12 0" stroke="#e88a6a" strokeWidth="1.800" />
          <path d="M1 6c4-3 8-3 12 0" stroke="#b9c85a" strokeWidth="1.800" />
        </Icon>
        alpari
      </TaskLogo>
    </TaskItem>
    <Tray>
      <Icon s={11} box="0 0 11 11"><path d="M.5 8l5-5 5 5" stroke="#222" strokeWidth="1.100" /></Icon>
      <Icon s={11} box="0 0 11 11"><path d="M.5 10A10 10 0 0110 .8M3.500 10A7 7 0 0110 3.800M6.500 10A4 4 0 0110 6.800M9 10h1" stroke="#3a332e" /></Icon>
      <Icon s={14} h={9} box="0 0 14 9"><path d="M3 1.500h9.500v6H3zM12.500 3.500h1v2h-1" stroke="#111" /><path d="M4 2.500h5v4H4zM0 1h4v3H0z" fill="#111" /></Icon>
      <Icon s={13} h={11} box="0 0 13 11"><path d="M.5 4h2l3-2.500v8L2.500 7h-2zM7.500 3.500v4M9.500 2c1 2 1 5 0 7M11.500 1c1.500 3 1.500 6 0 9" stroke="#222" /></Icon>
      <span>РУС</span>
      <time>21:10</time>
      <Icon s={14} box="0 0 14 14"><path d="M0 1h14v10H9l-2 2-2-2H0z" fill="#0a0a0a" /><path d="M2.500 4h9M2.500 6h9M2.500 8h5" stroke="#d9bca4" strokeWidth=".9" /></Icon>
    </Tray>
  </TaskBar>
);

export default function App() {
  return (
    <Window>
      <Global />
      <TitleBar>
        <AppLogo />
        <TitleText>16183838: Alpari-Demo - Демо Счет - Alpari - [EURCAD,Weekly]</TitleText>
        <WindowButton aria-label="Свернуть"><Icon s={9} box="0 0 9 9"><path d="M0 4.500h8" stroke="#fff" /></Icon></WindowButton>
        <WindowButton aria-label="Развернуть"><Icon s={9} box="0 0 9 9"><path d="M.5.5h8v8h-8z" stroke="#fff" /></Icon></WindowButton>
        <WindowButton aria-label="Закрыть"><Cross s={9} c="#fff" /></WindowButton>
      </TitleBar>
      <MenuBar>
        <MdiLogo />
        {["Файл", "Вид", "Вставка", "Графики", "Сервис", "Окно", "Справка"].map((m) => <MenuItem key={m}>{m}</MenuItem>)}
        <MdiButtons>
          <MdiButton aria-label="Свернуть окно"><Icon s={8} box="0 0 8 8"><path d="M2 6.500h4" stroke="#5c6c80" strokeWidth="1.400" /></Icon></MdiButton>
          <MdiButton aria-label="Восстановить окно"><Icon s={8} box="0 0 8 8"><path d="M3 3V1.500h4v3H5.500M1.500 3.500h4v3h-4z" stroke="#5c6c80" /></Icon></MdiButton>
          <MdiButton aria-label="Закрыть окно"><Cross s={6} c="#5c6c80" /></MdiButton>
        </MdiButtons>
      </MenuBar>
      <Toolbars />
      <Main>
        <NavigatorPanel />
        <ChartPanel />
      </Main>
      <TerminalPanel />
      <Status />
      <Tasks />
      <Annotation width="1" height="1" fill="none" stroke="#f00000" strokeWidth="2.400" strokeLinejoin="round" strokeLinecap="round">
        <path d="M185 199L200 208L203 213L202 220C185 218 165 218 150 219L127 221L100 222L73 216L53 210C45 205 44 197 50 194C62 193 72 193 83 194L133 196L160 199L185 204" />
        <path d="M240 91C232 86 222 86 213 87C204 90 200 97 199 103C201 111 207 116 225 121L232 123L265 123L328 124L348 125L385 126L425 125C433 119 436 113 438 108L437 102C433 98 429 97 423 95L412 92L397 89" />
      </Annotation>
    </Window>
  );
}
